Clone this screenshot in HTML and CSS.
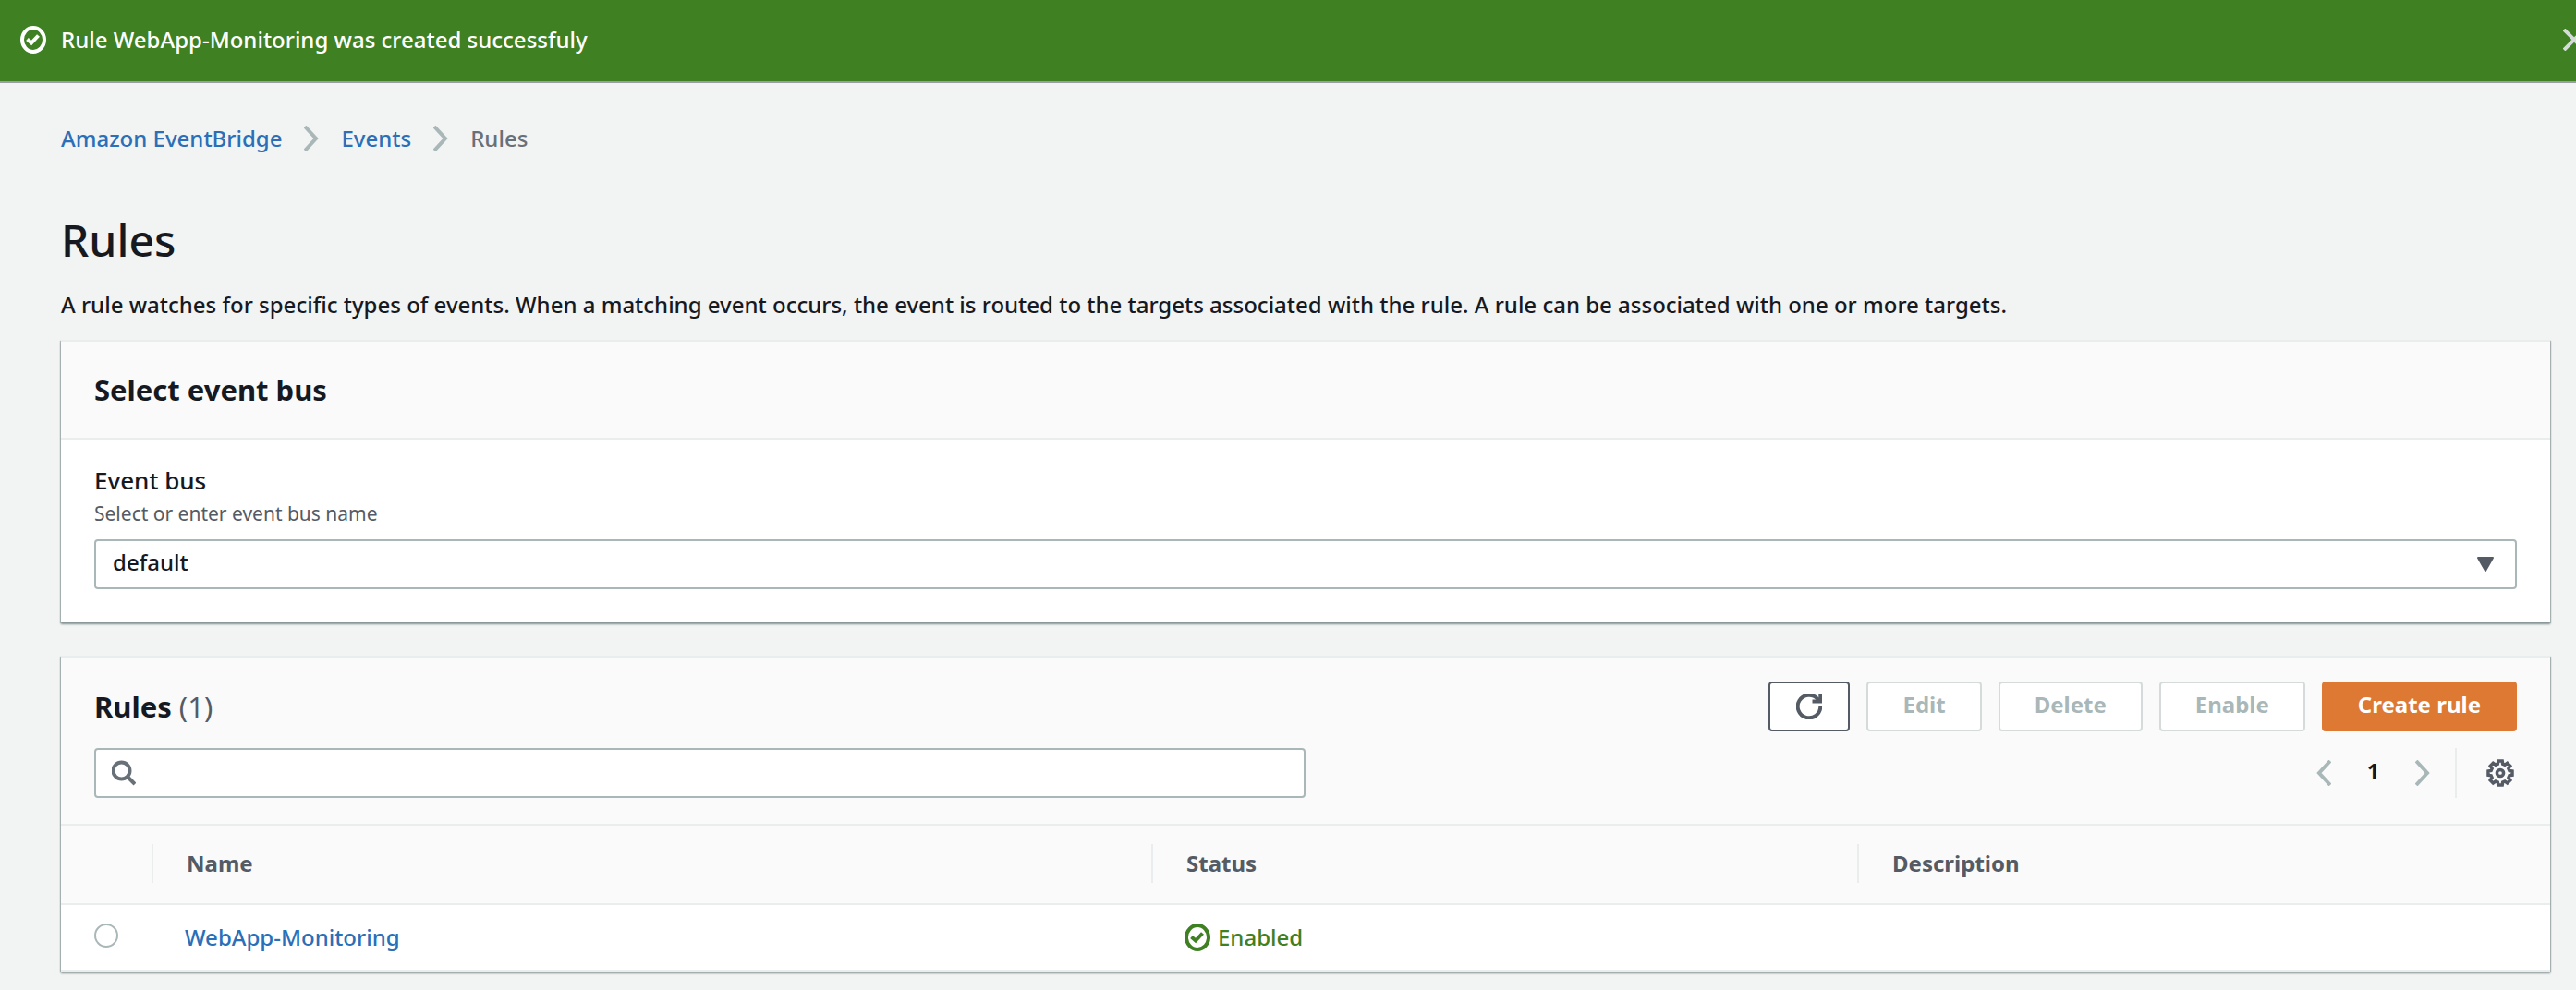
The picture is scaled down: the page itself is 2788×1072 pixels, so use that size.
FILE: index.html
```
<!DOCTYPE html>
<html lang="en">
<head>
    <meta charset="UTF-8">
    <meta name="viewport" content="width=device-width, initial-scale=1.0">
    <title>Rules - Amazon EventBridge</title>
    <link rel="stylesheet" href="styles.css">
</head>
<body>
    <div class="flash" role="status">
        <svg class="icon-status" viewBox="0 0 28 30">
            <ellipse cx="14" cy="15" rx="12" ry="13" />
            <path d="M7.5 14.5l4.5 4 7.5-8" />
        </svg>
        <span class="flash-text">Rule WebApp-Monitoring was created successfuly</span>
        <button class="flash-close" aria-label="Dismiss">
            <svg viewBox="0 0 24 24"><path d="M1 1l22 22M23 1L1 23" /></svg>
        </button>
    </div>

    <main class="content">
        <nav class="breadcrumbs" aria-label="Breadcrumbs">
            <a href="#">Amazon EventBridge</a>
            <svg class="chevron" viewBox="0 0 16 28"><path d="M1 1l12 13L1 27" /></svg>
            <a href="#">Events</a>
            <svg class="chevron" viewBox="0 0 16 28"><path d="M1 1l12 13L1 27" /></svg>
            <span>Rules</span>
        </nav>

        <h1>Rules</h1>
        <p class="intro">A rule watches for specific types of events. When a matching event occurs, the event is routed to the targets associated with the rule. A rule can be associated with one or more targets.</p>

        <section class="card">
            <div class="card-header">
                <h2>Select event bus</h2>
            </div>
            <div class="card-body">
                <label for="event-bus">Event bus</label>
                <p class="hint" id="event-bus-hint">Select or enter event bus name</p>
                <div class="select-wrap">
                    <select id="event-bus" aria-describedby="event-bus-hint">
                        <option>default</option>
                    </select>
                    <svg class="caret" viewBox="0 0 18 16"><path d="M1 1h16l-8 14z" /></svg>
                </div>
            </div>
        </section>

        <section class="card">
            <div class="table-tools">
                <div class="tools-row">
                    <h2>Rules <span class="count">(1)</span></h2>
                    <div class="actions">
                        <button class="btn btn-icon" aria-label="Refresh">
                            <svg viewBox="0 0 28 28">
                                <path d="M26.3 14A12.3 12.3 0 1 1 23 5.6L26 9" />
                                <path d="M26.3 0v8.5H17.5" />
                            </svg>
                        </button>
                        <button class="btn" disabled>Edit</button>
                        <button class="btn" disabled>Delete</button>
                        <button class="btn" disabled>Enable</button>
                        <button class="btn btn-primary">Create rule</button>
                    </div>
                </div>
                <div class="tools-row">
                    <div class="search">
                        <svg viewBox="0 0 26 28"><circle cx="10.5" cy="11.5" r="9" /><path d="M17 18l8 8" /></svg>
                        <input type="text" aria-label="Find rules">
                    </div>
                    <div class="pagination">
                        <button class="page-arrow" aria-label="Previous page">
                            <svg class="chevron" viewBox="0 0 16 28"><path d="M15 1L3 14l12 13" /></svg>
                        </button>
                        <button class="page-number">1</button>
                        <button class="page-arrow" aria-label="Next page">
                            <svg class="chevron" viewBox="0 0 16 28"><path d="M1 1l12 13L1 27" /></svg>
                        </button>
                        <button class="settings" aria-label="Preferences">
                            <svg viewBox="0 0 30 30">
                                <path d="M12.3 5.2L12.8 2h4.4l.5 3.2 2.3 1 2.7-1.9 3.1 3.1-1.9 2.7 1 2.3 3.1.5v4.4l-3.1.5-1 2.3 1.9 2.7-3.1 3.1-2.7-1.9-2.3 1-.5 3.1h-4.4l-.5-3.1-2.3-1-2.7 1.9-3.1-3.1 1.9-2.7-1-2.3-3.1-.5v-4.4l3.1-.5 1-2.3-1.9-2.7 3.1-3.1L10 6.2z" />
                                <circle cx="15" cy="15" r="3.6" />
                            </svg>
                        </button>
                    </div>
                </div>
            </div>

            <table>
                <thead>
                    <tr>
                        <th class="col-select"></th>
                        <th class="col-name"><div>Name</div></th>
                        <th class="col-status"><div>Status</div></th>
                        <th><div>Description</div></th>
                    </tr>
                </thead>
                <tbody>
                    <tr>
                        <td class="col-select"><input type="radio" name="rule" aria-label="WebApp-Monitoring"></td>
                        <td><a href="#">WebApp-Monitoring</a></td>
                        <td>
                            <span class="status">
                                <svg class="icon-status" viewBox="0 0 28 30">
                                    <ellipse cx="14" cy="15" rx="12" ry="13" />
                                    <path d="M7.5 14.5l4.5 4 7.5-8" />
                                </svg>
                                Enabled
                            </span>
                        </td>
                        <td></td>
                    </tr>
                </tbody>
            </table>
        </section>
    </main>
</body>
</html>
```
FILE: styles.css
```
* {
    box-sizing: border-box;
}

body {
    margin: 0;
    background-color: #f2f3f3;
    color: #16191f;
    font-family: "Noto Sans", "Open Sans", sans-serif;
    font-size: 24px;
    font-weight: 500;
    line-height: 36px;
    overflow-x: hidden;
}

h1, h2, p {
    margin: 0;
}

a {
    color: #2a6fb8;
    text-decoration: none;
}

button, input, select {
    font: inherit;
    color: inherit;
}

button {
    padding: 0;
    border: none;
    background: none;
    cursor: pointer;
}

svg {
    display: block;
    flex: none;
    fill: none;
    stroke: currentColor;
    stroke-width: 4;
}

/* Success banner */
.flash {
    display: flex;
    align-items: center;
    height: 90px;
    padding: 0 0 2px 22px;
    background-color: #3e8022;
    border-bottom: 2px solid #9a9da3;
    color: #fff;
}

.flash-text {
    margin-left: 16px;
}

.flash-close {
    margin-left: auto;
    margin-right: -10px;
    color: #d5dbdb;
}

.flash-close svg {
    width: 24px;
    height: 24px;
}

.icon-status {
    width: 28px;
    height: 30px;
}

.content {
    padding: 42px 28px 18px 66px;
}

.breadcrumbs {
    display: flex;
    align-items: center;
    gap: 24px;
    margin-bottom: 60px;
    color: #687078;
}

.chevron {
    width: 16px;
    height: 28px;
    color: #aab7b8;
}

h1 {
    margin-bottom: 20px;
    font-size: 48px;
    font-weight: 500;
    line-height: 64px;
}

.intro {
    margin-bottom: 20px;
}

/* Cards */
.card {
    margin-bottom: 36px;
    background-color: #fff;
    border-top: 2px solid #eaeded;
    box-shadow: 0 2px 2px #879596, 1px 1px 1px #b5bdbe, -1px 1px 1px #b5bdbe;
}

.card-header {
    padding: 34px 36px;
    background-color: #fafafa;
    border-bottom: 2px solid #eaeded;
}

h2 {
    font-size: 31px;
    font-weight: 700;
    line-height: 36px;
}

.count {
    color: #545b64;
    font-weight: 400;
}

.card-body {
    padding: 26px 36px 36px;
}

.card-body label {
    display: block;
    font-size: 26px;
}

.hint {
    margin-bottom: 10px;
    color: #545b64;
    font-size: 21px;
    font-weight: 400;
}

.select-wrap {
    position: relative;
}

.select-wrap select {
    display: block;
    width: 100%;
    height: 54px;
    padding: 0 18px 4px;
    appearance: none;
    background-color: #fff;
    border: 2px solid #aab7b8;
    border-radius: 4px;
}

.caret {
    position: absolute;
    top: 19px;
    right: 25px;
    width: 18px;
    height: 16px;
    color: #545b64;
    fill: currentColor;
    stroke-width: 2;
    stroke-linejoin: round;
    pointer-events: none;
}

/* Rules table */
.table-tools {
    display: flex;
    flex-direction: column;
    gap: 18px;
    padding: 26px 36px 28px;
    background-color: #fafafa;
    border-bottom: 2px solid #eaeded;
}

.tools-row {
    display: flex;
    align-items: center;
    justify-content: space-between;
}

.actions {
    display: flex;
    gap: 18px;
}

.btn {
    height: 54px;
    padding: 0 37px 4px;
    background-color: #fff;
    border: 2px solid #545b64;
    border-radius: 4px;
    color: #545b64;
    font-weight: 700;
}

.btn:disabled {
    border-color: #d5dbdb;
    color: #aab7b8;
}

.btn-icon {
    padding: 0 28px;
}

.btn-icon svg {
    width: 28px;
    height: 28px;
}

.btn-primary {
    background-color: #dd7933;
    border-color: #dd7933;
    color: #fff;
}

.search {
    display: flex;
    align-items: center;
    width: 50%;
    height: 54px;
    padding-left: 17px;
    background-color: #fff;
    border: 2px solid #aab7b8;
    border-radius: 4px;
    color: #687078;
}

.search svg {
    width: 26px;
    height: 28px;
}

.search input {
    flex: 1;
    height: 100%;
    border: none;
    outline: none;
    background: none;
}

.pagination {
    display: flex;
    align-items: center;
    height: 54px;
}

.page-number {
    width: 91px;
    padding-bottom: 4px;
    color: #16191f;
    font-weight: 700;
}

.settings {
    height: 100%;
    margin-left: 27px;
    padding: 0 3px 0 32px;
    border-left: 2px solid #eaeded;
    color: #545b64;
}

.settings svg {
    width: 30px;
    height: 30px;
    stroke-width: 3.5;
}

table {
    width: 100%;
    border-collapse: collapse;
    table-layout: fixed;
}

th {
    padding: 20px 0 22px;
    background-color: #fafafa;
    border-bottom: 2px solid #eaeded;
    color: #545b64;
    text-align: left;
}

th div {
    padding: 3px 36px;
    border-left: 2px solid #eaeded;
}

td {
    padding: 17px 36px;
    border-bottom: 2px solid #eaeded;
}

.col-select {
    width: 98px;
}

.col-name {
    width: 1082px;
}

.col-status {
    width: 764px;
}

td input {
    display: block;
    width: 26px;
    height: 26px;
    margin: 0 0 4px;
    appearance: none;
    background-color: #fff;
    border: 2px solid #aab7b8;
    border-radius: 50%;
}

.status {
    display: flex;
    align-items: center;
    gap: 8px;
    color: #3e8022;
}
```
